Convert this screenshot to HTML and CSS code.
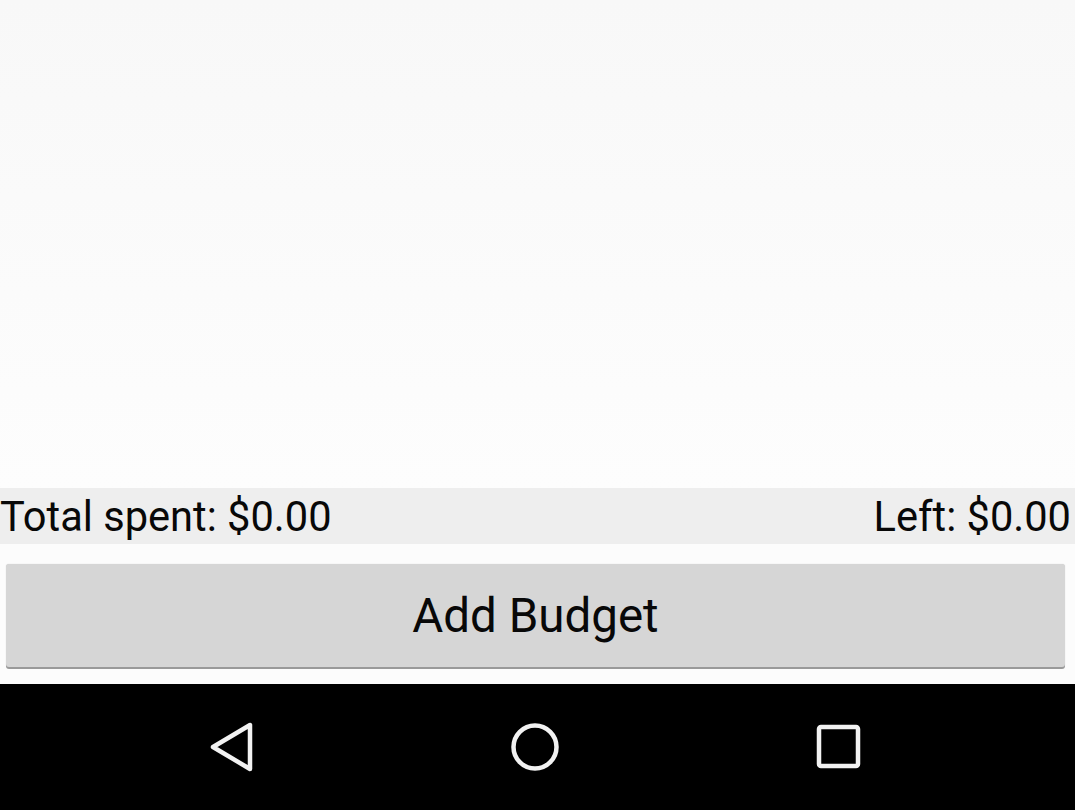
FILE: index.html
```html
<!DOCTYPE html>
<html>
<head>
<meta charset="utf-8">
<link rel="stylesheet" href="styles.css">
</head>
<body>
<div class="screen">
  <div class="content"></div>
  <div class="stats">
    <span class="stat">Total spent: $0.00</span>
    <span class="stat">Left: $0.00</span>
  </div>
  <div class="actions">
    <button class="btn">Add Budget</button>
  </div>
  <nav class="navbar">
    <svg class="nav-icon" width="60" height="60" viewBox="0 0 60 60">
      <path d="M49 8 L49 52 L12 30 Z" fill="none" stroke="#f2f2f2" stroke-width="4.5" stroke-linejoin="round"/>
    </svg>
    <svg class="nav-icon" width="60" height="60" viewBox="0 0 60 60">
      <circle cx="30" cy="30" r="21.5" fill="none" stroke="#f2f2f2" stroke-width="4.5"/>
    </svg>
    <svg class="nav-icon" width="60" height="60" viewBox="0 0 60 60">
      <rect x="10" y="10" width="39" height="39" rx="2" fill="none" stroke="#f2f2f2" stroke-width="4.5"/>
    </svg>
  </nav>
</div>
</body>
</html>
```

FILE: styles.css
```css
html, body {
  margin: 0;
  padding: 0;
}
body {
  width: 1075px;
  height: 810px;
  overflow: hidden;
  font-family: Roboto, "Noto Sans", sans-serif;
  background: #fcfcfc;
}
.screen {
  display: flex;
  flex-direction: column;
  height: 810px;
}
.content {
  height: 488px;
  background: linear-gradient(#f8f8f8, #fdfdfd);
}
.stats {
  height: 56px;
  background: #eeeeee;
  display: flex;
  justify-content: space-between;
  align-items: center;
  padding: 0 4px 0 0;
}
.stat {
  font-size: 41.6px;
  color: #080808;
  line-height: 56px;
  padding-top: 2px;
}
.actions {
  height: 140px;
  box-sizing: border-box;
  padding: 20px 10px 17px 6px;
  background: #fcfcfc;
}
.btn {
  display: block;
  width: 100%;
  height: 103px;
  border: none;
  border-radius: 3px;
  background: #d6d6d6;
  box-shadow: 0 2px 0 #9a9a9a, 0 0 1px #c8c8c8;
  font-family: Roboto, "Noto Sans", sans-serif;
  font-size: 47.5px;
  color: #080808;
  padding: 0;
}
.navbar {
  height: 126px;
  background: #000;
  display: flex;
  align-items: center;
  justify-content: center;
  gap: 244px;
  padding-right: 5px;
}
.nav-icon {
  display: block;
}
```
